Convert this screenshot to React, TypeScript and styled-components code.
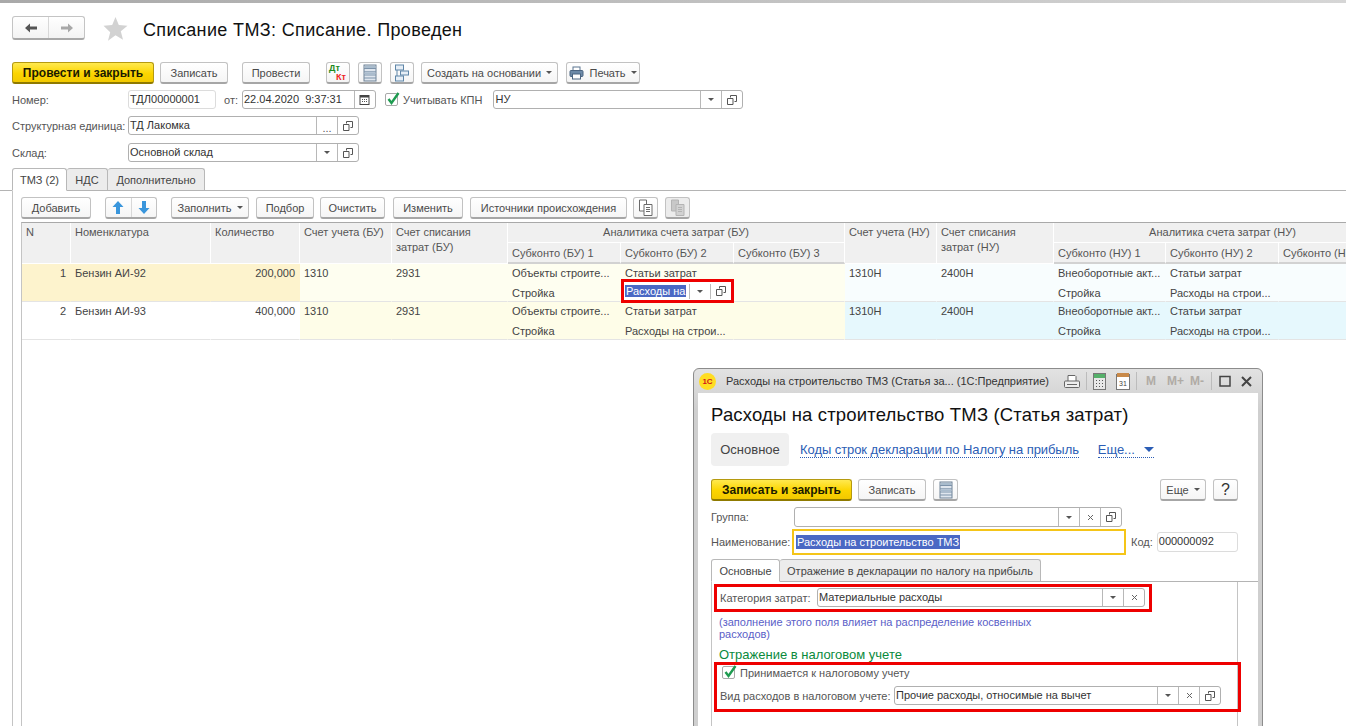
import React from 'react'
import styled, { createGlobalStyle } from 'styled-components'

const Global = createGlobalStyle`
  html, body { margin: 0; padding: 0; background: #fff; overflow: hidden; }
  body { font-family: "Liberation Sans", Arial, sans-serif; font-size: 11px; color: #3c3c3c; }
  * { box-sizing: border-box; }
`

const Page = styled.div`
  position: relative;
  width: 1346px;
  height: 726px;
  overflow: hidden;
  background: #fff;
`
const TopStrip = styled.div`
  height: 3px;
  background: linear-gradient(90deg, #a9a9a9, #bdbdbd 45%, #d6d6d6);
`
const Header = styled.div`
  display: flex;
  align-items: center;
  height: 24px;
  margin: 13px 0 0 12px;
`
const NavGroup = styled.div`
  display: flex;
  width: 73px;
  height: 24px;
  border: 1px solid #c4c4c4;
  border-bottom: 2px solid #a8a8a8;
  border-radius: 3px;
  background: linear-gradient(#fff, #f3f3f3);
`
const NavBtn = styled.div<{ $split?: boolean }>`
  flex: 1;
  display: flex;
  align-items: center;
  justify-content: center;
  align-self: stretch;
  border-left: ${p => (p.$split ? '1px solid #d8d8d8' : 'none')};
`
const Title = styled.h1`
  margin: 4px 0 0 15px;
  font-size: 18px;
  font-weight: 400;
  color: #111;
  letter-spacing: 0.36px;
`
const StarWrap = styled.div`
  display: flex;
  margin-left: 18px;
`
const Toolbar = styled.div<{ $mt: number; $pl?: number; $w?: number }>`
  display: flex;
  align-items: stretch;
  width: ${p => (p.$w ? `${p.$w}px` : 'auto')};
  height: 22px;
  margin-top: ${p => p.$mt}px;
  padding-left: ${p => p.$pl ?? 0}px;
`
const Button = styled.div<{ $w: number; $ml?: number; $primary?: boolean; $dim?: boolean }>`
  display: flex;
  align-items: center;
  justify-content: center;
  gap: 5px;
  flex: none;
  width: ${p => p.$w}px;
  margin-left: ${p => p.$ml ?? 0}px;
  font-size: ${p => (p.$primary ? 12 : 11)}px;
  white-space: nowrap;
  border-radius: 3px;
  color: ${p => (p.$primary ? '#1a1a00' : '#4a4a4a')};
  font-weight: ${p => (p.$primary ? 700 : 400)};
  border: 1px solid ${p => (p.$primary ? '#b59a10' : '#c2c2c2')};
  border-bottom: 2px solid ${p => (p.$primary ? '#8f7a00' : '#a6a6a6')};
  background: ${p =>
    p.$primary
      ? 'linear-gradient(#ffe94f, #fcd500 55%, #f2c900)'
      : p.$dim
        ? '#ececec'
        : 'linear-gradient(#fff, #f5f5f5)'};
`
const SplitButton = styled(Button)`
  gap: 0;
`
const HelpButton = styled(Button)`
  font-size: 16px;
  color: #333;
`
const Caret = styled.span`
  display: inline-block;
  flex: none;
  width: 0;
  height: 0;
  border-left: 3px solid transparent;
  border-right: 3px solid transparent;
  border-top: 3px solid #555;
`
const FormRow = styled.div<{ $mt: number; $h?: number }>`
  display: flex;
  align-items: center;
  height: ${p => p.$h ?? 19}px;
  margin-top: ${p => p.$mt}px;
  padding-left: 12px;
`
const Label = styled.div<{ $w?: number; $ml?: number }>`
  flex: none;
  width: ${p => (p.$w ? `${p.$w}px` : 'auto')};
  margin-left: ${p => p.$ml ?? 0}px;
  color: #555;
  font-size: 11px;
  white-space: nowrap;
`
const Field = styled.div<{ $w: number; $ml?: number; $soft?: boolean; $h?: number }>`
  display: flex;
  flex: none;
  align-items: stretch;
  width: ${p => p.$w}px;
  height: ${p => p.$h ?? 19}px;
  margin-left: ${p => p.$ml ?? 0}px;
  border: 1px solid ${p => (p.$soft ? '#dcdcdc' : '#b0b0b0')};
  border-radius: 3px;
  background: #fff;
`
const FieldText = styled.div`
  flex: 1;
  padding-left: 1px;
  overflow: hidden;
  line-height: 17px;
  color: #333;
  font-size: 11px;
  white-space: nowrap;
`
const FieldBtn = styled.div<{ $w?: number }>`
  display: flex;
  align-items: center;
  justify-content: center;
  flex: none;
  width: ${p => p.$w ?? 21}px;
  border-left: 1px solid #b8b8b8;
  color: #666;
`
const Check = styled.div<{ $ml?: number }>`
  position: relative;
  flex: none;
  width: 13px;
  height: 13px;
  margin-left: ${p => p.$ml ?? 0}px;
  border: 1px solid #a9a9a9;
  border-radius: 2px;
  background: #fff;
`
const CheckMark = styled.svg`
  position: absolute;
  left: 0;
  top: -3px;
`
const TabStrip = styled.div<{ $mt: number; $pl: number }>`
  display: flex;
  align-items: flex-end;
  height: 23px;
  margin-top: ${p => p.$mt}px;
  padding-left: ${p => p.$pl}px;
  border-bottom: 1px solid #b4b4b4;
`
const Tab = styled.div<{ $w: number; $active?: boolean }>`
  display: flex;
  align-items: center;
  justify-content: center;
  flex: none;
  width: ${p => p.$w}px;
  height: ${p => (p.$active ? 23 : 22)}px;
  margin-bottom: ${p => (p.$active ? -1 : 0)}px;
  border: 1px solid #b8b8b8;
  border-bottom: ${p => (p.$active ? '1px solid #fff' : 'none')};
  border-left-width: ${p => (p.$active ? 1 : 0)}px;
  border-radius: 3px 3px 0 0;
  background: ${p => (p.$active ? '#fff' : '#ececec')};
  color: #444;
  font-size: 11px;
  white-space: nowrap;
`
const TabPanel = styled.div`
  height: 536px;
  margin-left: 12px;
  padding: 6px 0 0 8px;
  border-left: 1px solid #c4c4c4;
`
const TableBox = styled.div`
  height: 506px;
  margin-top: 3px;
  overflow: hidden;
  border-left: 1px solid #c4c4c4;
  border-top: 1px solid #a9a9a9;
`
const Grid = styled.table`
  width: 1330px;
  table-layout: fixed;
  border-collapse: separate;
  border-spacing: 0;
  font-size: 11px;
`
const Th = styled.th<{ $center?: boolean }>`
  height: 20px;
  padding: 2px 4px 0;
  vertical-align: top;
  overflow: hidden;
  text-align: ${p => (p.$center ? 'center' : 'left')};
  font-weight: 400;
  line-height: 15px;
  color: #555;
  white-space: nowrap;
  background: #f0f0f0;
  border-right: 1px solid #fff;
  border-bottom: 1px solid #fff;
`
const HeadGap = styled.tr`
  th {
    height: 21px;
    padding-top: 3px;
    border-bottom: 2px solid #d2d2d2;
  }
`
const Td = styled.td<{ $bg?: string; $right?: boolean }>`
  padding: 0;
  vertical-align: top;
  overflow: hidden;
  background: ${p => p.$bg ?? '#fff'};
  text-align: ${p => (p.$right ? 'right' : 'left')};
  border-right: 1px solid ${p => p.$bg ?? '#fff'};
  border-bottom: 1px solid #e4e4e4;
`
const EditTd = styled(Td)`
  overflow: visible;
`
const Line = styled.div`
  height: 20px;
  padding: 0 4px;
  overflow: hidden;
  line-height: 19px;
  color: #444;
  white-space: nowrap;
  &:last-child {
    height: 17px;
  }
`
const CellEditor = styled.div`
  display: flex;
  align-items: center;
  width: 107px;
  height: 18px;
  margin: -2px 0 1px 3px;
  outline: 3px solid #ee0000;
  background: #fff;
`
const Selected = styled.span`
  padding: 0 1px;
  background: #4a68c4;
  color: #fff;
  line-height: 14px;
  white-space: nowrap;
`
const EditorText = styled.div`
  flex: 1;
  padding-left: 1px;
  overflow: hidden;
`
const EditorBtn = styled.div`
  display: flex;
  align-items: center;
  justify-content: center;
  width: 21px;
  height: 15px;
  border-left: 1px solid #bcbcbc;
`

/* окно поверх документа */
const Dialog = styled.div`
  position: absolute;
  left: 693px;
  top: 368px;
  width: 570px;
  height: 380px;
  padding: 0 4px;
  border: 1px solid #8c8c8c;
  border-radius: 6px 6px 0 0;
  background: linear-gradient(#e2e2e2, #cfcfcf 40px);
`
const DialogBar = styled.div`
  display: flex;
  align-items: center;
  height: 24px;
  padding: 0 6px 0 1px;
`
const DialogCaption = styled.div`
  margin-left: 10px;
  font-size: 11px;
  color: #333;
  white-space: nowrap;
`
const BarIcons = styled.div`
  display: flex;
  align-items: center;
  margin-left: auto;
`
const BarSep = styled.div<{ $m?: number }>`
  width: 1px;
  height: 18px;
  margin: 0 ${p => p.$m ?? 6}px;
  background: #bcbcbc;
`
const BarGap = styled.div<{ $w: number }>`
  width: ${p => p.$w}px;
`
const MemKey = styled.span<{ $mr?: number }>`
  margin-right: ${p => p.$mr ?? 0}px;
  font-size: 12px;
  font-weight: 700;
  color: #b0aba5;
`
const DialogBody = styled.div`
  height: 360px;
  padding: 11px 0 0 13px;
  background: #fff;
`
const DialogTitle = styled.h2`
  margin: 0;
  height: 22px;
  font-size: 18.5px;
  font-weight: 400;
  line-height: 22px;
  letter-spacing: 0.16px;
  color: #111;
`
const SectionNav = styled.div`
  display: flex;
  align-items: center;
  height: 33px;
  margin-top: 7px;
`
const SectionActive = styled.div`
  display: flex;
  align-items: center;
  justify-content: center;
  width: 78px;
  height: 33px;
  border-radius: 4px;
  background: #f0f0f0;
  font-size: 13px;
  color: #444;
`
const SectionLink = styled.div<{ $ml: number }>`
  display: flex;
  align-items: center;
  gap: 9px;
  margin-left: ${p => p.$ml}px;
  font-size: 13px;
  line-height: 15px;
  letter-spacing: -0.07px;
  color: #2b5db5;
  border-bottom: 1px dotted #2b5db5;
  white-space: nowrap;
`
const BlueCaret = styled.span`
  width: 0;
  height: 0;
  border-left: 5px solid transparent;
  border-right: 5px solid transparent;
  border-top: 5px solid #2b5db5;
`
const Spacer = styled.div`
  flex: 1;
`
const DialogRow = styled.div<{ $mt?: number; $h: number }>`
  display: flex;
  align-items: center;
  height: ${p => p.$h}px;
  margin-top: ${p => p.$mt ?? 0}px;
  width: 527px;
`
const FocusField = styled.div`
  display: flex;
  align-items: center;
  flex: none;
  width: 334px;
  height: 26px;
  padding-left: 2px;
  border: 2px solid #f5c518;
  background: #fff;
`
const InnerPanel = styled.div`
  width: 527px;
  height: 160px;
  padding: 2px 0 0 2px;
  border: 1px solid #c4c4c4;
  border-top: none;
`
const RedBox = styled.div<{ $w: number; $h: number }>`
  width: ${p => p.$w}px;
  height: ${p => p.$h}px;
  padding: 1px 3px;
  border: 3px solid #ee0000;
`
const RedRow = styled.div<{ $mt?: number }>`
  display: flex;
  align-items: center;
  margin-top: ${p => p.$mt ?? 0}px;
`
const Hint = styled.div`
  width: 340px;
  height: 26px;
  margin: 4px 0 0 5px;
  color: #5a60c8;
  font-size: 11px;
  line-height: 12px;
`
const GreenHead = styled.div`
  margin: 5px 0 0 5px;
  height: 15px;
  color: #0a8a3c;
  font-size: 13px;
  line-height: 15px;
`
const DtKt = styled.div`
  width: 22px;
  height: 18px;
  font-size: 9px;
  font-weight: 700;
  line-height: 9px;
`
const Dt = styled.div`
  padding-left: 2px;
  color: #1d8a1d;
`
const Kt = styled.div`
  padding-left: 9px;
  color: #ee2222;
`
const LogoBadge = styled.div`
  display: flex;
  align-items: center;
  justify-content: center;
  flex: none;
  width: 17px;
  height: 17px;
  border-radius: 50%;
  background: #ffdd22;
  color: #d0161b;
  font-size: 8px;
  font-weight: 700;
`
const CalNum = styled.text`
  font-family: "Liberation Sans", sans-serif;
  font-size: 7px;
  fill: #444;
`
const Dots = styled.span`
  padding-top: 5px;
  color: #555;
`

const ArrowIcon = ({ right, color }: { right?: boolean; color: string }) => (
  <svg width="14" height="12" viewBox="0 0 14 12">
    <path
      d={right ? 'M13 6 8 1.5V4.5H1v3h7v3z' : 'M1 6l5-4.5v3h7v3H6v3z'}
      fill={color}
    />
  </svg>
)
const StarIcon = () => (
  <svg width="25" height="25" viewBox="0 0 25 25">
    <path d="M12.5 1l3.3 8.1 8.7.6-6.7 5.6 2.2 8.5-7.5-4.6L5 24.8l2.2-8.5L.5 9.7l8.7-.6z" fill="#d2d2d2" />
  </svg>
)
const OpenIcon = () => (
  <svg width="10" height="10" viewBox="0 0 10 10" fill="none" stroke="#555" strokeWidth="1">
    <path d="M3.5 2.5v-2h6v6h-2" />
    <path d="M.5 3.5h5.5v6H.5z" />
  </svg>
)
const CrossIcon = () => (
  <svg width="7" height="7" viewBox="0 0 7 7" stroke="#666" strokeWidth="1">
    <path d="M1 1l5 5M6 1 1 6" />
  </svg>
)
const CalendarIcon = () => (
  <svg width="11" height="11" viewBox="0 0 11 11">
    <rect x="1" y="1.5" width="9" height="9" fill="#fff" stroke="#444" />
    <rect x="1" y="1" width="9" height="2.5" fill="#444" />
    <path d="M3 5.5h1M5 5.5h1M7 5.5h1M3 7.5h1M5 7.5h1M7 7.5h1" stroke="#555" />
  </svg>
)
const ListIcon = () => (
  <svg width="14" height="18" viewBox="0 0 14 18">
    <rect x="1" y="1" width="12" height="16" fill="#dfe6ee" stroke="#6e8296" />
    <path d="M1 4.5h12M1 7.8h12M1 11h12M1 14h12" stroke="#7d93aa" />
    <rect x="2" y="2" width="10" height="2" fill="#a9bccd" />
    <rect x="2" y="8.5" width="10" height="2" fill="#a9bccd" />
  </svg>
)
const StructIcon = () => (
  <svg width="16" height="18" viewBox="0 0 16 18" fill="#e6eef6" stroke="#5f86a8">
    <rect x="1.5" y="1" width="8" height="5" />
    <rect x="6.5" y="7" width="8" height="4" />
    <rect x="1.5" y="12" width="8" height="5" />
    <path d="M3 6v6" fill="none" />
  </svg>
)
const PrintIcon = () => (
  <svg width="15" height="14" viewBox="0 0 15 14">
    <rect x="4" y="1" width="7" height="4" fill="#fff" stroke="#5b7490" />
    <rect x="1" y="4.5" width="13" height="6" rx="1" fill="#6d8aa8" stroke="#4b6480" />
    <rect x="3.5" y="8" width="8" height="5" fill="#fff" stroke="#4b6480" />
  </svg>
)
const BlueArrow = ({ down }: { down?: boolean }) => (
  <svg width="12" height="15" viewBox="0 0 12 15">
    <path d={down ? 'M4 1h4v7h3.5L6 14 .5 8H4z' : 'M6 1l5.5 6H8v7H4V7H.5z'} fill="#3a96dc" />
  </svg>
)
const CopyIcon = ({ dim }: { dim?: boolean }) => (
  <svg width="15" height="17" viewBox="0 0 15 17" fill="#fff" stroke={dim ? '#b4b4b4' : '#6a6a6a'}>
    <path d="M1.5 1h7v11h-7z" fill={dim ? '#c8c8c8' : '#fff'} />
    <path d="M6 5.5h8v11H6z" fill={dim ? '#d2d2d2' : '#fff'} />
    <path d="M8 8.5h4M8 10.5h4M8 12.5h4" />
  </svg>
)
const SmallPrinter = () => (
  <svg width="16" height="15" viewBox="0 0 16 15" fill="#fff" stroke="#666">
    <path d="M4 7V1.5h7l1 1V7" />
    <rect x=".5" y="7" width="15" height="6.5" rx="1" fill="#eee" />
    <path d="M3 10.5h10" />
  </svg>
)
const CalcIcon = () => (
  <svg width="13" height="17" viewBox="0 0 13 17">
    <rect x=".5" y=".5" width="12" height="16" fill="#e8e8e8" stroke="#777" />
    <rect x="1" y="1" width="11" height="4" fill="#55b06a" />
    <path d="M3 7.5h1M6 7.5h1M9 7.5h1M3 10.5h1M6 10.5h1M9 10.5h1M3 13.5h1M6 13.5h1M9 13.5h1" stroke="#555" />
  </svg>
)
const DayIcon = () => (
  <svg width="14" height="18" viewBox="0 0 14 18">
    <rect x=".5" y="2.5" width="13" height="15" fill="#fff" stroke="#777" />
    <rect x="1" y="1" width="12" height="4" fill="#c98a4a" />
    <CalNum x="3" y="14">31</CalNum>
  </svg>
)
const MaxIcon = () => (
  <svg width="12" height="12" viewBox="0 0 12 12" fill="none" stroke="#444" strokeWidth="1.5">
    <rect x="1" y="1.5" width="10" height="9.5" />
  </svg>
)
const CloseIcon = () => (
  <svg width="11" height="11" viewBox="0 0 11 11" stroke="#444" strokeWidth="2">
    <path d="M1 1l9 9M10 1l-9 9" />
  </svg>
)
const GreenCheck = () => (
  <CheckMark width="16" height="16" viewBox="0 0 16 16">
    <path d="M2.5 8l3 4L12.5 2" fill="none" stroke="#1e9b50" strokeWidth="2.4" />
  </CheckMark>
)

const yellowBg = '#fdf3cd'
const buBg = '#fefef0'
const buBg2 = '#fefde8'
const nuBg = '#f8fdfe'
const nuBg2 = '#e6f8fd'

const colWidths = [49, 140, 89, 92, 116, 113, 113, 111, 92, 117, 112, 113, 113]

const rows = [
  { n: '1', name: 'Бензин АИ-92', qty: '200,000', head: yellowBg, bu: buBg, nu: nuBg, edit: true },
  { n: '2', name: 'Бензин АИ-93', qty: '400,000', head: '#fff', bu: buBg2, nu: nuBg2, edit: false },
]

export default function App() {
  return (
    <Page>
      <Global />
      <TopStrip />
      <Header>
        <NavGroup>
          <NavBtn><ArrowIcon color="#555" /></NavBtn>
          <NavBtn $split><ArrowIcon right color="#a8a8a8" /></NavBtn>
        </NavGroup>
        <StarWrap><StarIcon /></StarWrap>
        <Title>Списание ТМЗ: Списание. Проведен</Title>
      </Header>

      <Toolbar $mt={22} $pl={12}>
        <Button $w={142} $primary>Провести и закрыть</Button>
        <Button $w={68} $ml={6}>Записать</Button>
        <Button $w={68} $ml={14}>Провести</Button>
        <Button $w={24} $ml={16}>
          <DtKt><Dt>Дт</Dt><Kt>Кт</Kt></DtKt>
        </Button>
        <Button $w={24} $ml={8}><ListIcon /></Button>
        <Button $w={24} $ml={8}><StructIcon /></Button>
        <Button $w={137} $ml={7}>Создать на основании <Caret /></Button>
        <Button $w={74} $ml={8}><PrintIcon />Печать <Caret /></Button>
      </Toolbar>

      <FormRow $mt={6}>
        <Label $w={116}>Номер:</Label>
        <Field $w={88} $soft><FieldText>ТДЛ00000001</FieldText></Field>
        <Label $ml={8}>от:</Label>
        <Field $w={134} $ml={4}>
          <FieldText>22.04.2020 &nbsp;9:37:31</FieldText>
          <FieldBtn><CalendarIcon /></FieldBtn>
        </Field>
        <Check $ml={9}><GreenCheck /></Check>
        <Label $ml={5}>Учитывать КПН</Label>
        <Field $w={250} $ml={11}>
          <FieldText>НУ</FieldText>
          <FieldBtn><Caret /></FieldBtn>
          <FieldBtn><OpenIcon /></FieldBtn>
        </Field>
      </FormRow>
      <FormRow $mt={7}>
        <Label $w={116}>Структурная единица:</Label>
        <Field $w={231}>
          <FieldText>ТД Лакомка</FieldText>
          <FieldBtn><Dots>...</Dots></FieldBtn>
          <FieldBtn><OpenIcon /></FieldBtn>
        </Field>
      </FormRow>
      <FormRow $mt={8}>
        <Label $w={116}>Склад:</Label>
        <Field $w={231}>
          <FieldText>Основной склад</FieldText>
          <FieldBtn><Caret /></FieldBtn>
          <FieldBtn><OpenIcon /></FieldBtn>
        </Field>
      </FormRow>

      <TabStrip $mt={6} $pl={12}>
        <Tab $w={55} $active>ТМЗ (2)</Tab>
        <Tab $w={41}>НДС</Tab>
        <Tab $w={97}>Дополнительно</Tab>
      </TabStrip>

      <TabPanel>
        <Toolbar $mt={0}>
          <Button $w={70}>Добавить</Button>
          <SplitButton $w={52} $ml={14}>
            <NavBtn><BlueArrow /></NavBtn>
            <NavBtn $split><BlueArrow down /></NavBtn>
          </SplitButton>
          <Button $w={78} $ml={14}>Заполнить <Caret /></Button>
          <Button $w={58} $ml={7}>Подбор</Button>
          <Button $w={65} $ml={6}>Очистить</Button>
          <Button $w={70} $ml={8}>Изменить</Button>
          <Button $w={157} $ml={7}>Источники происхождения</Button>
          <Button $w={25} $ml={6}><CopyIcon /></Button>
          <Button $w={25} $ml={7} $dim><CopyIcon dim /></Button>
        </Toolbar>

        <TableBox>
          <Grid>
            <colgroup>
              {colWidths.map((w, i) => <col key={i} style={{ width: w }} />)}
            </colgroup>
            <thead>
              <tr>
                <Th rowSpan={2}>N</Th>
                <Th rowSpan={2}>Номенклатура</Th>
                <Th rowSpan={2}>Количество</Th>
                <Th rowSpan={2}>Счет учета (БУ)</Th>
                <Th rowSpan={2}>Счет списания<br />затрат (БУ)</Th>
                <Th colSpan={3} $center>Аналитика счета затрат (БУ)</Th>
                <Th rowSpan={2}>Счет учета (НУ)</Th>
                <Th rowSpan={2}>Счет списания<br />затрат (НУ)</Th>
                <Th colSpan={3} $center>Аналитика счета затрат (НУ)</Th>
              </tr>
              <HeadGap>
                <Th>Субконто (БУ) 1</Th>
                <Th>Субконто (БУ) 2</Th>
                <Th>Субконто (БУ) 3</Th>
                <Th>Субконто (НУ) 1</Th>
                <Th>Субконто (НУ) 2</Th>
                <Th>Субконто (НУ) 3</Th>
              </HeadGap>
            </thead>
            <tbody>
              {rows.map(r => (
                <tr key={r.n}>
                  <Td $bg={r.head} $right><Line>{r.n}</Line><Line /></Td>
                  <Td $bg={r.head}><Line>{r.name}</Line><Line /></Td>
                  <Td $bg={r.head} $right><Line>{r.qty}</Line><Line /></Td>
                  <Td $bg={r.bu}><Line>1310</Line><Line /></Td>
                  <Td $bg={r.bu}><Line>2931</Line><Line /></Td>
                  <Td $bg={r.bu}><Line>Объекты строите...</Line><Line>Стройка</Line></Td>
                  <EditTd $bg={r.bu}>
                    <Line>Статьи затрат</Line>
                    {r.edit ? (
                      <CellEditor>
                        <EditorText><Selected>Расходы на</Selected></EditorText>
                        <EditorBtn><Caret /></EditorBtn>
                        <EditorBtn><OpenIcon /></EditorBtn>
                      </CellEditor>
                    ) : (
                      <Line>Расходы на строи...</Line>
                    )}
                  </EditTd>
                  <Td $bg={r.bu}><Line /><Line /></Td>
                  <Td $bg={r.nu}><Line>1310Н</Line><Line /></Td>
                  <Td $bg={r.nu}><Line>2400Н</Line><Line /></Td>
                  <Td $bg={r.nu}><Line>Внеоборотные акт...</Line><Line>Стройка</Line></Td>
                  <Td $bg={r.nu}><Line>Статьи затрат</Line><Line>Расходы на строи...</Line></Td>
                  <Td $bg={r.nu}><Line /><Line /></Td>
                </tr>
              ))}
            </tbody>
          </Grid>
        </TableBox>
      </TabPanel>

      <Dialog>
        <DialogBar>
          <LogoBadge>1С</LogoBadge>
          <DialogCaption>Расходы на строительство ТМЗ (Статья за...  (1С:Предприятие)</DialogCaption>
          <BarIcons>
            <SmallPrinter />
            <BarSep />
            <CalcIcon />
            <BarGap $w={10} />
            <DayIcon />
            <BarSep />
            <BarGap $w={3} />
            <MemKey $mr={11}>M</MemKey>
            <MemKey $mr={6}>M+</MemKey>
            <MemKey>M-</MemKey>
            <BarSep $m={7} />
            <MaxIcon />
            <BarGap $w={10} />
            <CloseIcon />
          </BarIcons>
        </DialogBar>
        <DialogBody>
          <DialogTitle>Расходы на строительство ТМЗ (Статья затрат)</DialogTitle>
          <SectionNav>
            <SectionActive>Основное</SectionActive>
            <SectionLink $ml={11}>Коды строк декларации по Налогу на прибыль</SectionLink>
            <SectionLink $ml={19}>Еще... <BlueCaret /></SectionLink>
          </SectionNav>
          <Toolbar $mt={13} $w={527}>
            <Button $w={141} $primary>Записать и закрыть</Button>
            <Button $w={68} $ml={6}>Записать</Button>
            <Button $w={25} $ml={7}><ListIcon /></Button>
            <Spacer />
            <Button $w={46}>Еще <Caret /></Button>
            <HelpButton $w={25} $ml={7}>?</HelpButton>
          </Toolbar>
          <DialogRow $mt={6} $h={20}>
            <Label $w={83}>Группа:</Label>
            <Field $w={328} $h={20}>
              <FieldText />
              <FieldBtn><Caret /></FieldBtn>
              <FieldBtn><CrossIcon /></FieldBtn>
              <FieldBtn><OpenIcon /></FieldBtn>
            </Field>
          </DialogRow>
          <DialogRow $mt={2} $h={26}>
            <Label $w={81}>Наименование:</Label>
            <FocusField><Selected>Расходы на строительство ТМЗ</Selected></FocusField>
            <Label $ml={5}>Код:</Label>
            <Field $w={81} $ml={4} $soft $h={20}><FieldText>000000092</FieldText></Field>
          </DialogRow>
          <TabStrip $mt={4} $pl={0}>
            <Tab $w={69} $active>Основные</Tab>
            <Tab $w={261}>Отражение в декларации по налогу на прибыль</Tab>
          </TabStrip>
          <InnerPanel>
            <RedBox $w={438} $h={28}>
              <RedRow>
                <Label $w={97}>Категория затрат:</Label>
                <Field $w={328}>
                  <FieldText>Материальные расходы</FieldText>
                  <FieldBtn><Caret /></FieldBtn>
                  <FieldBtn><CrossIcon /></FieldBtn>
                </Field>
              </RedRow>
            </RedBox>
            <Hint>(заполнение этого поля влияет на распределение косвенных расходов)</Hint>
            <GreenHead>Отражение в налоговом учете</GreenHead>
            <RedBox $w={527} $h={50}>
              <RedRow>
                <Check $ml={2}><GreenCheck /></Check>
                <Label $ml={5}>Принимается к налоговому учету</Label>
              </RedRow>
              <RedRow $mt={7}>
                <Label $w={174}>Вид расходов в налоговом учете:</Label>
                <Field $w={327}>
                  <FieldText>Прочие расходы, относимые на вычет</FieldText>
                  <FieldBtn><Caret /></FieldBtn>
                  <FieldBtn><CrossIcon /></FieldBtn>
                  <FieldBtn><OpenIcon /></FieldBtn>
                </Field>
              </RedRow>
            </RedBox>
          </InnerPanel>
        </DialogBody>
      </Dialog>
    </Page>
  )
}
